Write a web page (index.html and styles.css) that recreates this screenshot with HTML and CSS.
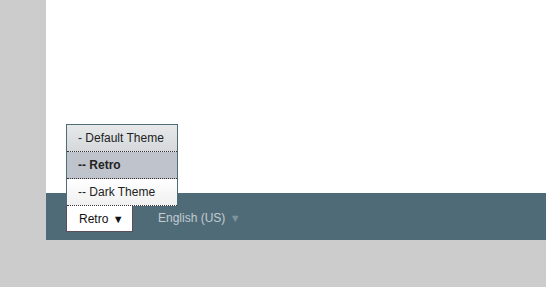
FILE: index.html
```html
<!DOCTYPE html>
<html lang="en">
<head>
    <meta charset="UTF-8">
    <title>Theme switcher</title>
    <link rel="stylesheet" href="styles.css">
</head>
<body>
    <div class="page">
        <div class="content"></div>
        <div class="footer">
            <div class="switcher">
                <ul class="theme-menu">
                    <li class="option">- Default Theme</li>
                    <li class="option selected">-- Retro</li>
                    <li class="option">-- Dark Theme</li>
                </ul>
                <div class="current">Retro <span class="arrow">&#9660;</span></div>
            </div>
            <div class="language">English (US) <span class="arrow">&#9660;</span></div>
        </div>
    </div>
</body>
</html>
```

FILE: styles.css
```css
body {
    margin: 0;
    background-color: #cccccc;
    font-family: "Liberation Sans", Arial, sans-serif;
    font-size: 12px;
    color: #222;
}
.page {
    margin-left: 46px;
    width: 500px;
}
.content {
    height: 193px;
    background-color: #fff;
}
.footer {
    height: 47px;
    background-color: #4f6b78;
    display: flex;
    align-items: flex-start;
    padding-left: 20px;
    box-sizing: border-box;
}
.switcher {
    position: relative;
    margin-top: 12px;
}
.current {
    width: 67px;
    height: 27px;
    box-sizing: border-box;
    background-color: #fff;
    border: 1px solid #5c4d5a;
    border-top: 1px dotted #333;
    padding: 6px 0 0 12px;
    color: #111;
}
.current .arrow {
    font-size: 11px;
    color: #111;
    margin-left: 1px;
}
.theme-menu {
    position: absolute;
    left: 0;
    bottom: 26px;
    width: 112px;
    margin: 0;
    padding: 0;
    list-style: none;
    border: 1px solid #4f6b78;
    border-bottom: none;
    box-sizing: border-box;
}
.option {
    height: 27px;
    box-sizing: border-box;
    padding: 6px 0 0 11px;
    border-bottom: 1px dotted #333;
    background: linear-gradient(#ffffff, #f0f0f0);
    color: #222;
}
.option:first-child {
    background: linear-gradient(#e6e8ea, #d6d9dc);
}
.option.selected {
    background-color: #bfc4cc;
    background-image: none;
    font-weight: bold;
}
.language {
    margin: 18px 0 0 25px;
    color: #c3ccd1;
}
.language .arrow {
    font-size: 11px;
    color: #7f939d;
    margin-left: 1px;
}
```
